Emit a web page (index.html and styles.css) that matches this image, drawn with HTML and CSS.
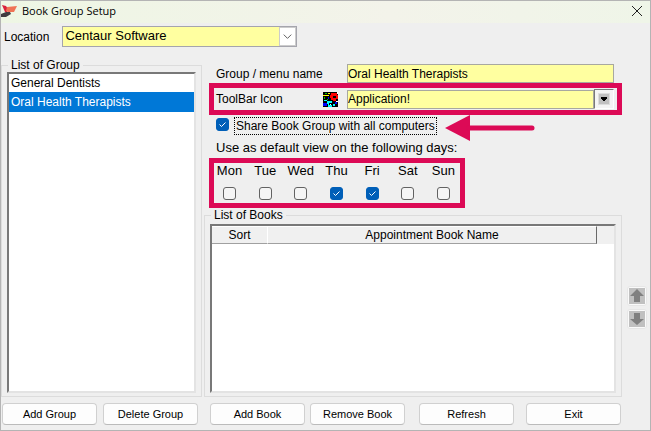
FILE: index.html
```html
<!DOCTYPE html>
<html lang="en">
<head>
  <meta charset="UTF-8" />
  <title>Book Group Setup</title>
  <link rel="stylesheet" href="styles.css">
</head>
<body>
  <div class="window">
    <header class="titlebar">
      <svg class="logo" viewBox="0 0 16 14" aria-hidden="true">
        <path d="M1 1l4 1 2 3-1 3H4z" fill="#d9203c" />
        <path d="M6 3l10-1-3 6H7L5 7z" fill="#f07355" />
        <path d="M5 8l4 0 1 2-5 3H0v-3z" fill="#403c40" />
      </svg>
      <h1>Book Group Setup</h1>
      <button class="close" aria-label="Close">
        <svg viewBox="0 0 10 10"><path d="M0 0l10 10M10 0L0 10" stroke="#222" fill="none" /></svg>
      </button>
    </header>

    <div class="location">
      <label for="location">Location</label>
      <div class="combo">
        <select id="location">
          <option>Centaur Software</option>
        </select>
        <svg class="combo-arrow" viewBox="0 0 16 18" aria-hidden="true"><path d="M4 7l4 4 4-4" stroke="#555" fill="none" /></svg>
      </div>
    </div>

    <main class="main">
      <section class="groups">
        <fieldset class="panel">
          <legend>List of Group</legend>
          <ul class="listbox" role="listbox" aria-label="List of Group">
            <li role="option" aria-selected="false">General Dentists</li>
            <li class="selected" role="option" aria-selected="true">Oral Health Therapists</li>
          </ul>
        </fieldset>
        <div class="actions">
          <button class="btn">Add Group</button>
          <button class="btn">Delete Group</button>
        </div>
      </section>

      <section class="details">
        <div class="field">
          <label for="group-name">Group / menu name</label>
          <input class="text" type="text" id="group-name" value="Oral Health Therapists">
        </div>

        <div class="field marked">
          <label for="toolbar-icon">ToolBar Icon</label>
          <svg class="app-icon" viewBox="0 0 15 15" shape-rendering="crispEdges" aria-hidden="true">
            <path d="M0 0h15v15H0z" fill="#000" />
            <path d="M0 3h6v1H0zM5 1h2v1H5z" fill="#ff0" />
            <path d="M2 1h2v1H2zM1 5h1v2H1zM4 7h1v1H4z" fill="#0c0" />
            <path d="M0 11h4v3H0zM12 10h2v2h-2zM5 5h1v2H5z" fill="#00f" />
            <path d="M1 8h3v1H1zM4 9h5v2H6v2h3v2H5v-3H4zM10 12h2v2h-2z" fill="#0ff" />
            <path d="M8 1h6v2h1v4h-2v2h-3V8H8V6H7V3h1z" fill="#f00" />
            <path d="M10 4h3v2h-3z" fill="#000" />
            <path d="M14 0h1v2h-1zM13 9h2v1h-2zM7 12h1v1H7z" fill="#fff" />
          </svg>
          <input class="text" type="text" id="toolbar-icon" value="Application!">
          <button class="drop" aria-label="Choose icon">
            <svg viewBox="0 0 10 10" shape-rendering="crispEdges"><path d="M2 3h6v2H7v1H6v1H4V6H3V5H2z" /></svg>
          </button>
        </div>

        <div class="share">
          <input class="check" type="checkbox" id="share" checked>
          <label for="share">Share Book Group with all computers</label>
          <svg class="pointer" viewBox="0 0 90 26" aria-hidden="true">
            <path d="M0 13L25 0v26z" fill="#dc0a56" />
            <path d="M24 13h63" stroke="#dc0a56" stroke-width="5" stroke-linecap="round" />
          </svg>
        </div>

        <p class="hint">Use as default view on the following days:</p>
        <div class="days">
          <label>Mon <input class="check" type="checkbox"></label>
          <label>Tue <input class="check" type="checkbox"></label>
          <label>Wed <input class="check" type="checkbox"></label>
          <label>Thu <input class="check" type="checkbox" checked></label>
          <label>Fri <input class="check" type="checkbox" checked></label>
          <label>Sat <input class="check" type="checkbox"></label>
          <label>Sun <input class="check" type="checkbox"></label>
        </div>

        <div class="books">
          <fieldset class="panel">
            <legend>List of Books</legend>
            <div class="grid">
              <table>
                <thead>
                  <tr><th class="sort">Sort</th><th>Appointment Book Name</th><th class="end"></th></tr>
                </thead>
                <tbody></tbody>
              </table>
            </div>
          </fieldset>
          <div class="order">
            <button class="move" aria-label="Move up">
              <svg viewBox="0 0 16 16"><path d="M0 0h16v16H0z" fill="#c0c0c0" /><path d="M8 1l7 7h-4v6H5V8H1z" fill="#808080" /></svg>
            </button>
            <button class="move" aria-label="Move down">
              <svg viewBox="0 0 16 16"><path d="M0 0h16v16H0z" fill="#c0c0c0" /><path d="M8 14l7-6h-4V2H5v6H1z" fill="#808080" /></svg>
            </button>
          </div>
        </div>

        <div class="actions">
          <button class="btn">Add Book</button>
          <button class="btn">Remove Book</button>
          <button class="btn refresh">Refresh</button>
          <button class="btn exit">Exit</button>
        </div>
      </section>
    </main>
  </div>
</body>
</html>
```
FILE: styles.css
```css
* {
  box-sizing: border-box;
}
body {
  margin: 0;
  font-family: "Liberation Sans", Arial, sans-serif;
  font-size: 12px;
  line-height: 14px;
  color: #000;
}
button, input, select {
  font: inherit;
  color: inherit;
  margin: 0;
  padding: 0;
}
svg {
  display: block;
}
.window {
  display: flex;
  flex-direction: column;
  min-height: 100vh;
  background-color: #efefef;
  border: 1px solid #b4b4b4;
}
.titlebar {
  display: flex;
  align-items: center;
  height: 22px;
  padding: 0 8px 2px 0;
  background: linear-gradient(90deg, #eef6e4, #f3f3ea 60%, #eff5e8);
}
.titlebar h1 {
  flex: 1;
  margin: 0;
  font-family: "Open Sans", sans-serif;
  font-size: 11px;
  font-weight: normal;
}
.logo {
  width: 16px;
  height: 14px;
  margin-right: 5px;
}
.close {
  width: 10px;
  height: 10px;
  border: none;
  background: none;
}
.location {
  display: flex;
  align-items: center;
  gap: 13px;
  padding: 3px 3px 0;
}
.combo {
  position: relative;
  width: 235px;
}
.combo select {
  display: block;
  width: 100%;
  height: 21px;
  padding: 0 2px 2px;
  appearance: none;
  border: 1px solid #a5a5ad;
  border-radius: 0;
  background-color: #ffffa0;
  font-size: 13px;
}
.combo-arrow {
  position: absolute;
  top: 1px;
  right: 1px;
  width: 17px;
  height: 19px;
  border: 1px solid #ccc;
  background-color: #fff;
  pointer-events: none;
}
.main {
  flex: 1;
  display: flex;
  gap: 2px;
  padding-bottom: 5px;
}
.groups {
  display: flex;
  flex-direction: column;
  width: 201px;
  padding-top: 11px;
}
.details {
  flex: 1;
  display: flex;
  flex-direction: column;
  padding-top: 17px;
}
.panel {
  flex: 1;
  display: flex;
  min-width: 0;
  margin: 0;
  padding: 0 5px 3px;
  border: 1px solid #dcdcdc;
}
.panel legend {
  margin-left: 1px;
  padding: 0 3px;
}
.listbox, .grid {
  flex: 1;
  margin: 0;
  padding: 0;
  background-color: #fff;
  border: 2px solid #e3e3e3;
  border-top-color: #787878;
  border-left-color: #787878;
}
.listbox {
  list-style: none;
}
.listbox li {
  padding: 2px;
}
.listbox .selected {
  padding: 3px 2px;
  background-color: #0078d7;
  color: #fff;
}
.actions {
  display: flex;
  gap: 6px;
  padding: 6px 0 0 1px;
}
.btn {
  width: 95px;
  height: 22px;
  background-color: #fdfdfd;
  border: 1px solid #d0d0d0;
  border-bottom-color: #bbb;
  border-radius: 4px;
  font-size: 11px;
}
.details .actions {
  gap: 5px;
  padding-left: 6px;
}
.refresh {
  margin-left: 9px;
}
.exit {
  margin-left: 7px;
}
.field {
  display: flex;
  align-items: center;
  margin-right: 28px;
  padding: 0 8px 0 12px;
}
.field label {
  flex: none;
  width: 131px;
}
.text {
  flex: 1;
  min-width: 0;
  height: 19px;
  border: 1px solid #a8a8a0;
  background-color: #ffffa0;
}
.marked, .days {
  border: 5px solid #dc0a56;
}
.marked {
  margin-left: 5px;
  padding: 0 3px 0 2px;
  height: 32px;
}
.marked label {
  width: 107px;
}
.app-icon {
  width: 15px;
  height: 15px;
  margin-right: 9px;
}
.drop {
  width: 20px;
  height: 20px;
  padding: 3px;
  border: 1px solid #fff;
  border-top-color: #787878;
  border-left-color: #787878;
  background-color: #f4f4f4;
}
.drop svg {
  width: 12px;
  height: 12px;
  border: 1px solid #ddd;
  background-color: #c0c0c0;
}
.share {
  display: flex;
  align-items: flex-start;
  padding-left: 12px;
}
.share .check {
  margin-top: 3px;
}
.share label {
  margin: 2px 8px 0 5px;
  padding: 1px;
  border: 1px dotted #000;
}
.pointer {
  width: 90px;
  height: 26px;
}
.check {
  appearance: none;
  display: block;
  width: 13px;
  height: 13px;
  border: 1px solid #626262;
  border-radius: 3px;
  background-color: #f5f5f5;
}
.check:checked {
  border-color: #005fb8;
  background: #005fb8 url("data:image/svg+xml,%3Csvg xmlns='http://www.w3.org/2000/svg' viewBox='0 0 11 11'%3E%3Cpath d='M2.5 5.5l2 2 4-4' fill='none' stroke='%23fff'/%3E%3C/svg%3E") center / 11px 11px no-repeat;
}
.hint {
  margin: 0 0 3px 12px;
  font-size: 13px;
}
.days {
  align-self: flex-start;
  display: flex;
  justify-content: space-between;
  width: 256px;
  height: 50px;
  margin-left: 5px;
  padding: 1px 4px 0 3px;
  font-size: 13px;
}
.days label {
  display: flex;
  flex-direction: column;
  align-items: center;
  gap: 9px;
  width: 25px;
}
.books {
  flex: 1;
  display: flex;
  gap: 5px;
  padding-right: 3px;
}
.grid {
  margin-top: 2px;
}
.grid table {
  width: 100%;
  border-collapse: separate;
  border-spacing: 0;
  background-color: #f0f0f0;
}
.grid th {
  height: 18px;
  padding: 0;
  font-weight: normal;
  border-top: 1px solid #fff;
  border-bottom: 1px solid #a0a0a0;
  border-right: 1px solid #696969;
}
.grid .sort {
  width: 56px;
  border-right-color: #fff;
}
.grid .end {
  width: 17px;
  border: none;
}
.order {
  display: flex;
  flex-direction: column;
  gap: 3px;
  padding-top: 78px;
}
.move {
  width: 20px;
  height: 20px;
  padding: 1px;
  border: 1px solid #e6e6e6;
  border-radius: 3px;
  background-color: #fafafa;
}
.move svg {
  width: 16px;
  height: 16px;
}
```
